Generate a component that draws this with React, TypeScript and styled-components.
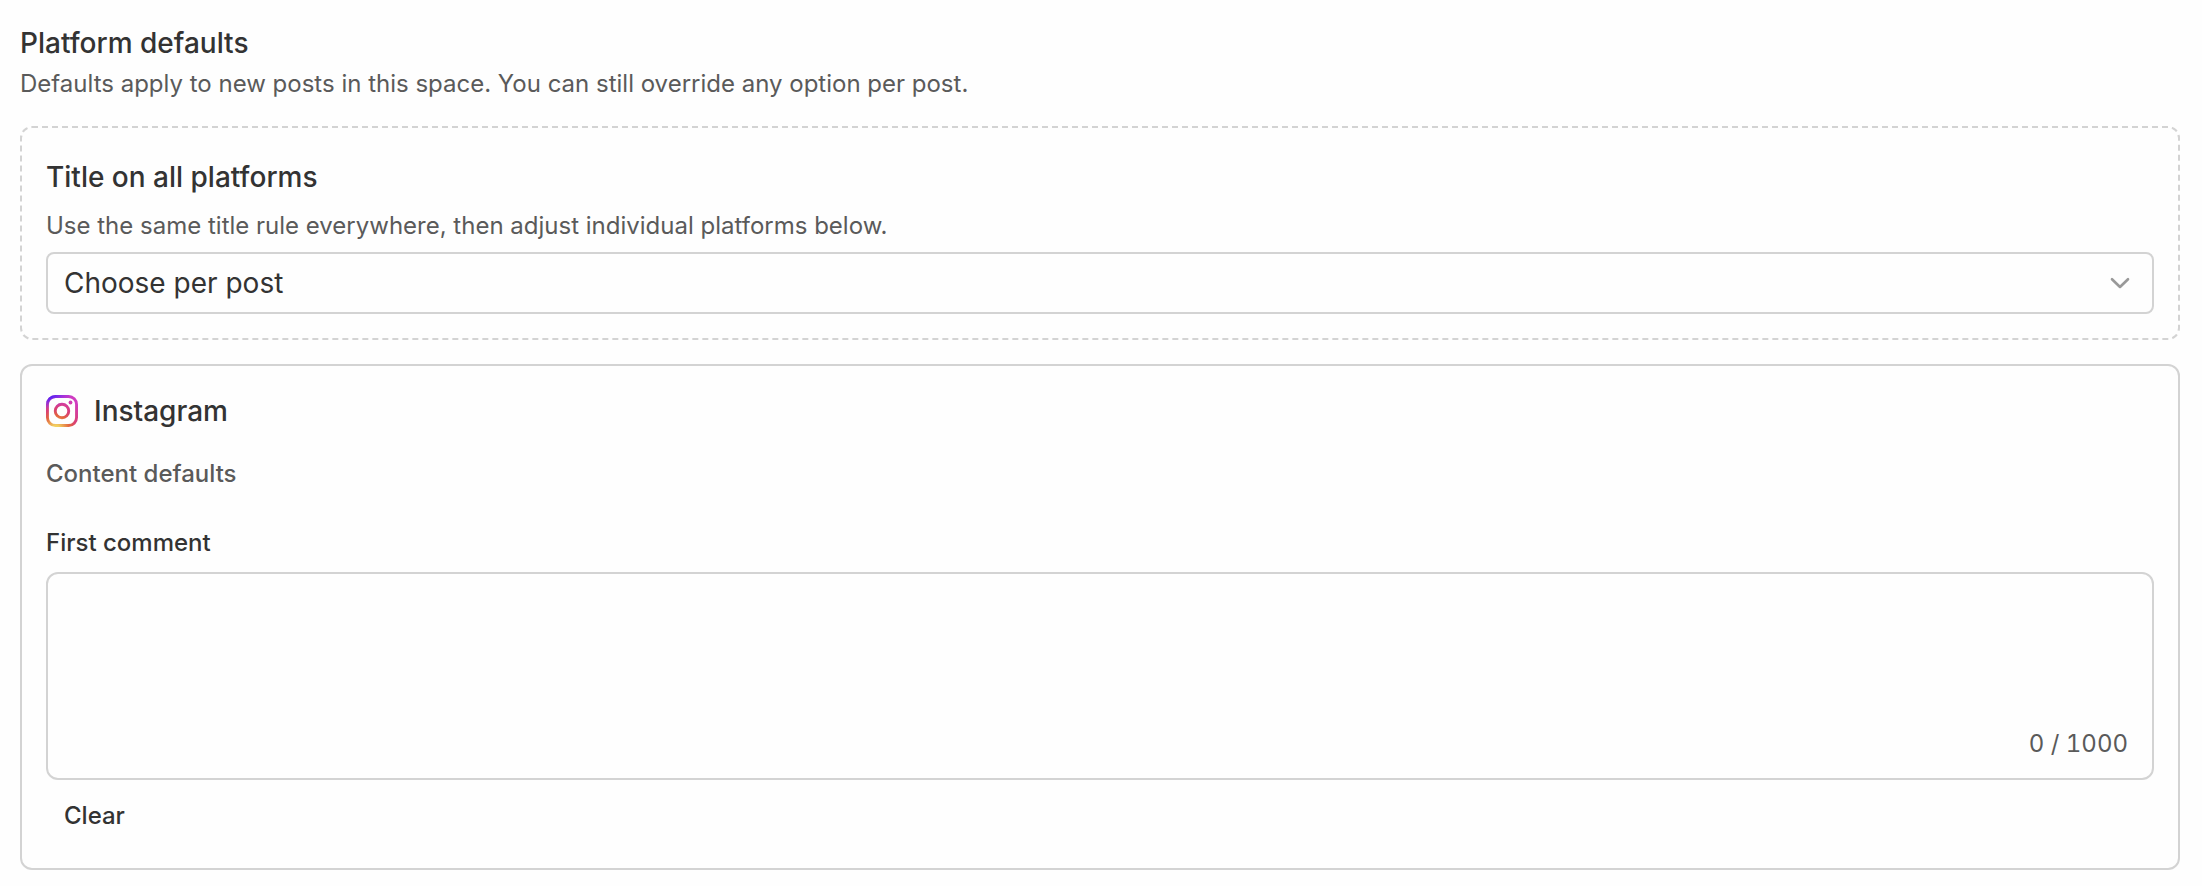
import React, { useState } from "react";
import styled, { createGlobalStyle } from "styled-components";

const GlobalStyle = createGlobalStyle`
  *, *::before, *::after { box-sizing: border-box; }
  body {
    margin: 0;
    background: #fefefe;
    color: #333333;
    font-family: Inter, "Liberation Sans", sans-serif;
    font-size: 24px;
    line-height: 36px;
  }
`;

const Page = styled.main`
  display: flex;
  flex-direction: column;
  gap: 24px;
  padding: 24px 22px 16px 20px;
`;

const PageHeader = styled.header`
  display: flex;
  flex-direction: column;
  gap: 4px;
`;

const PageTitle = styled.h1`
  margin: 0;
  font-size: 28px;
  line-height: 38px;
  font-weight: 500;
`;

const Description = styled.p`
  margin: 0;
  color: #5a5a5a;
`;

const Card = styled.section<{ $dashed?: boolean }>`
  display: flex;
  flex-direction: column;
  padding: 24px;
  border: 2px ${(p) => (p.$dashed ? "dashed" : "solid")} #d3d3d3;
  border-radius: 12px;
`;

const RuleLabel = styled.label`
  margin-bottom: 6px;
  font-size: 28px;
  line-height: 50px;
  font-weight: 500;
`;

const SelectWrap = styled.div`
  position: relative;
  margin-top: 8px;
`;

const Select = styled.select`
  display: block;
  appearance: none;
  width: 100%;
  height: 62px;
  padding: 0 64px 0 16px;
  border: 2px solid #d3d3d3;
  border-radius: 8px;
  background: #fefefe;
  color: inherit;
  font-family: inherit;
  font-size: 28px;
`;

const Chevron = styled.svg`
  position: absolute;
  top: 50%;
  right: 20px;
  width: 28px;
  height: 28px;
  margin-top: -14px;
  pointer-events: none;
`;

const PlatformHeader = styled.header`
  display: flex;
  align-items: center;
  gap: 16px;
`;

const PlatformName = styled.h2`
  margin: 0;
  font-size: 28px;
  line-height: 42px;
  font-weight: 500;
`;

const GroupTitle = styled.h3`
  margin: 24px 0 32px;
  color: #5a5a5a;
  font-size: 24px;
  font-weight: 500;
`;

const FieldLabel = styled.label`
  margin-bottom: 10px;
  line-height: 38px;
  font-weight: 500;
`;

const CommentBox = styled.div`
  position: relative;
`;

const TextArea = styled.textarea`
  display: block;
  width: 100%;
  height: 208px;
  padding: 16px 16px 56px;
  border: 2px solid #d3d3d3;
  border-radius: 12px;
  background: #fefefe;
  color: inherit;
  font: inherit;
  resize: none;
`;

const Counter = styled.output`
  position: absolute;
  right: 26px;
  bottom: 18px;
  color: #5a5a5a;
  font-variant-numeric: tabular-nums;
`;

const ClearButton = styled.button`
  align-self: flex-start;
  height: 56px;
  margin-top: 8px;
  padding: 0 18px;
  border: 0;
  border-radius: 8px;
  background: transparent;
  color: inherit;
  font: inherit;
  font-weight: 500;
  cursor: pointer;
`;

function InstagramIcon() {
  return (
    <svg width="32" height="32" viewBox="0 0 32 32" fill="none" aria-hidden="true">
      <defs>
        <radialGradient id="warm" gradientUnits="userSpaceOnUse" cx="10" cy="34.5" r="33">
          <stop offset="0" stopColor="#f5dc62" />
          <stop offset="0.12" stopColor="#f2d060" />
          <stop offset="0.42" stopColor="#e2643f" />
          <stop offset="0.62" stopColor="#d93f74" />
          <stop offset="1" stopColor="#d03cc0" />
        </radialGradient>
        <radialGradient
          id="cool"
          gradientUnits="userSpaceOnUse"
          cx="0"
          cy="0"
          r="1"
          gradientTransform="translate(-3 -1) rotate(78.7) scale(16 34)"
        >
          <stop offset="0" stopColor="#3a20f5" />
          <stop offset="0.3" stopColor="#4a20f5" />
          <stop offset="1" stopColor="#8a2cff" stopOpacity="0" />
        </radialGradient>
        <g id="camera">
          <path
            fillRule="evenodd"
            d="M9.4 0h13.2A9.4 9.4 0 0 1 32 9.4v13.2a9.4 9.4 0 0 1-9.4 9.4H9.4A9.4 9.4 0 0 1 0 22.6V9.4A9.4 9.4 0 0 1 9.4 0Zm.2 2.9a6.7 6.7 0 0 0-6.7 6.7v12.8a6.7 6.7 0 0 0 6.7 6.7h12.8a6.7 6.7 0 0 0 6.7-6.7V9.6a6.7 6.7 0 0 0-6.7-6.7Z"
          />
          <path
            fillRule="evenodd"
            d="M16 7.8a8.2 8.2 0 1 1 0 16.4a8.2 8.2 0 0 1 0-16.4Zm0 2.9a5.3 5.3 0 1 0 0 10.6a5.3 5.3 0 0 0 0-10.6Z"
          />
          <circle cx="24.5" cy="7.5" r="1.9" />
        </g>
      </defs>
      <use href="#camera" fill="url(#warm)" />
      <use href="#camera" fill="url(#cool)" />
    </svg>
  );
}

const COMMENT_LIMIT = 1000;

export default function App() {
  const [rule, setRule] = useState("choose");
  const [comment, setComment] = useState("");

  return (
    <>
      <GlobalStyle />
      <Page>
        <PageHeader>
          <PageTitle>Platform defaults</PageTitle>
          <Description>
            Defaults apply to new posts in this space. You can still override any option per post.
          </Description>
        </PageHeader>

        <Card $dashed>
          <RuleLabel htmlFor="title-rule">Title on all platforms</RuleLabel>
          <Description id="title-rule-help">
            Use the same title rule everywhere, then adjust individual platforms below.
          </Description>
          <SelectWrap>
            <Select
              id="title-rule"
              aria-describedby="title-rule-help"
              value={rule}
              onChange={(e) => setRule(e.target.value)}
            >
              <option value="choose">Choose per post</option>
            </Select>
            <Chevron viewBox="0 0 28 28" fill="none" aria-hidden="true">
              <path
                d="M6 10.2l8 7.8l8-7.8"
                stroke="#999999"
                strokeWidth="2.6"
                strokeLinecap="round"
                strokeLinejoin="round"
              />
            </Chevron>
          </SelectWrap>
        </Card>

        <Card>
          <PlatformHeader>
            <InstagramIcon />
            <PlatformName>Instagram</PlatformName>
          </PlatformHeader>
          <GroupTitle>Content defaults</GroupTitle>
          <FieldLabel htmlFor="first-comment">First comment</FieldLabel>
          <CommentBox>
            <TextArea
              id="first-comment"
              maxLength={COMMENT_LIMIT}
              value={comment}
              onChange={(e) => setComment(e.target.value)}
            />
            <Counter htmlFor="first-comment">
              {comment.length} / {COMMENT_LIMIT}
            </Counter>
          </CommentBox>
          <ClearButton type="button" onClick={() => setComment("")}>
            Clear
          </ClearButton>
        </Card>
      </Page>
    </>
  );
}
